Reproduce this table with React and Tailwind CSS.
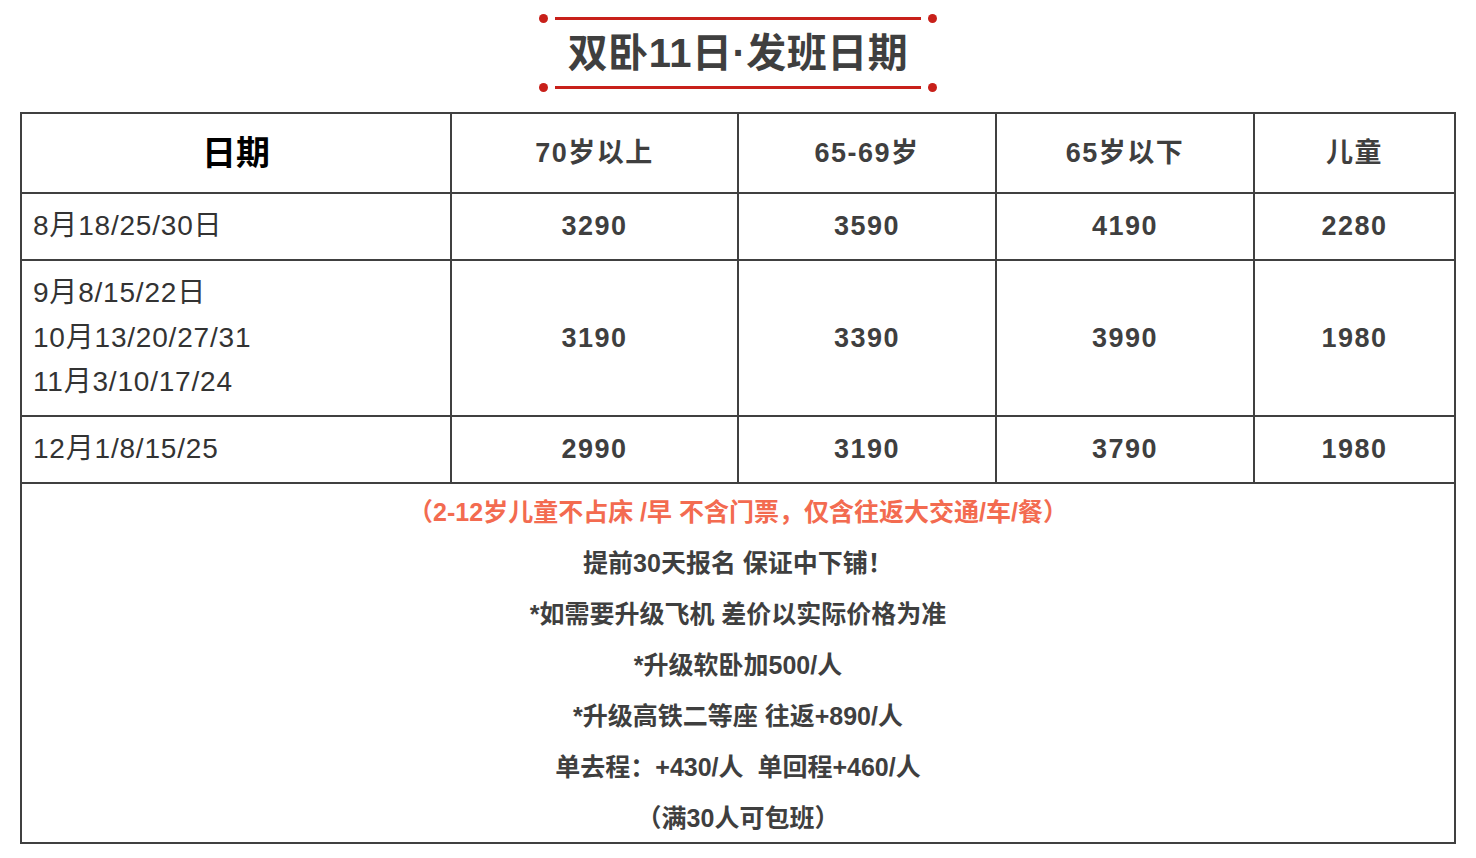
const rows = [
  { dates: ["8月18/25/30日"], prices: ["3290", "3590", "4190", "2280"], h: "h-[67px]" },
  { dates: ["9月8/15/22日", "10月13/20/27/31", "11月3/10/17/24"], prices: ["3190", "3390", "3990", "1980"], h: "h-[156px]" },
  { dates: ["12月1/8/15/25"], prices: ["2990", "3190", "3790", "1980"], h: "h-[67px]" },
];

const notes = [
  "提前30天报名 保证中下铺！",
  "*如需要升级飞机 差价以实际价格为准",
  "*升级软卧加500/人",
  "*升级高铁二等座 往返+890/人",
  "单去程：+430/人  单回程+460/人",
  "（满30人可包班）",
];

function Rule() {
  return (
    <div className="flex items-center h-[9px] gap-[7px]">
      <div className="w-[9px] h-[9px] rounded-full bg-[#c8201a]" />
      <div className="w-[366px] h-[3px] bg-[#c8201a]" />
      <div className="w-[9px] h-[9px] rounded-full bg-[#c8201a]" />
    </div>
  );
}

export default function App() {
  const font = "font-['Liberation_Sans','Noto_Sans_CJK_SC',sans-serif]";
  const cell = "border-2 border-[#404040]";
  return (
    <div className={`w-[1476px] h-[858px] bg-white ${font} text-[#333]`}>
      <div className="flex flex-col items-center pt-[14px]">
        <Rule />
        <h1 className="h-[60px] leading-[60px] text-[40px] font-bold text-[#3f3f3f] tracking-[0.5px]">
          双卧11日·发班日期
        </h1>
        <Rule />
      </div>

      <table className="mt-[20px] ml-[20px] w-[1434px] border-collapse table-fixed">
        <colgroup>
          <col className="w-[430px]" />
          <col className="w-[287px]" />
          <col className="w-[258px]" />
          <col className="w-[258px]" />
          <col className="w-[201px]" />
        </colgroup>
        <thead>
          <tr className="h-[80px]">
            <th className={`${cell} text-[34px] font-bold text-black`}>日期</th>
            {["70岁以上", "65-69岁", "65岁以下", "儿童"].map((t) => (
              <th key={t} className={`${cell} text-[27px] font-bold text-[#3f3f3f] tracking-[1.5px]`}>
                {t}
              </th>
            ))}
          </tr>
        </thead>
        <tbody>
          {rows.map((r, i) => (
            <tr key={i} className={r.h}>
              <td className={`${cell} pl-[11px] text-[28px] leading-[44.5px] tracking-[0.8px] text-[#333]`}>
                {r.dates.map((d) => (
                  <div key={d}>{d}</div>
                ))}
              </td>
              {r.prices.map((p, j) => (
                <td key={j} className={`${cell} text-center text-[27px] font-bold text-[#3f3f3f] tracking-[1.5px]`}>
                  {p}
                </td>
              ))}
            </tr>
          ))}
          <tr>
            <td colSpan={5} className={`${cell} p-0 align-top text-center`}>
              <div className="h-[358px] pt-[3px]">
                <div className="text-[25px] leading-[51px] font-bold text-[#f36b50]">
                  （2-12岁儿童不占床 /早 不含门票，仅含往返大交通/车/餐）
                </div>
                {notes.map((n) => (
                  <div key={n} className="text-[25px] leading-[51px] font-bold text-[#3f3f3f] whitespace-pre">
                    {n}
                  </div>
                ))}
              </div>
            </td>
          </tr>
        </tbody>
      </table>
    </div>
  );
}
